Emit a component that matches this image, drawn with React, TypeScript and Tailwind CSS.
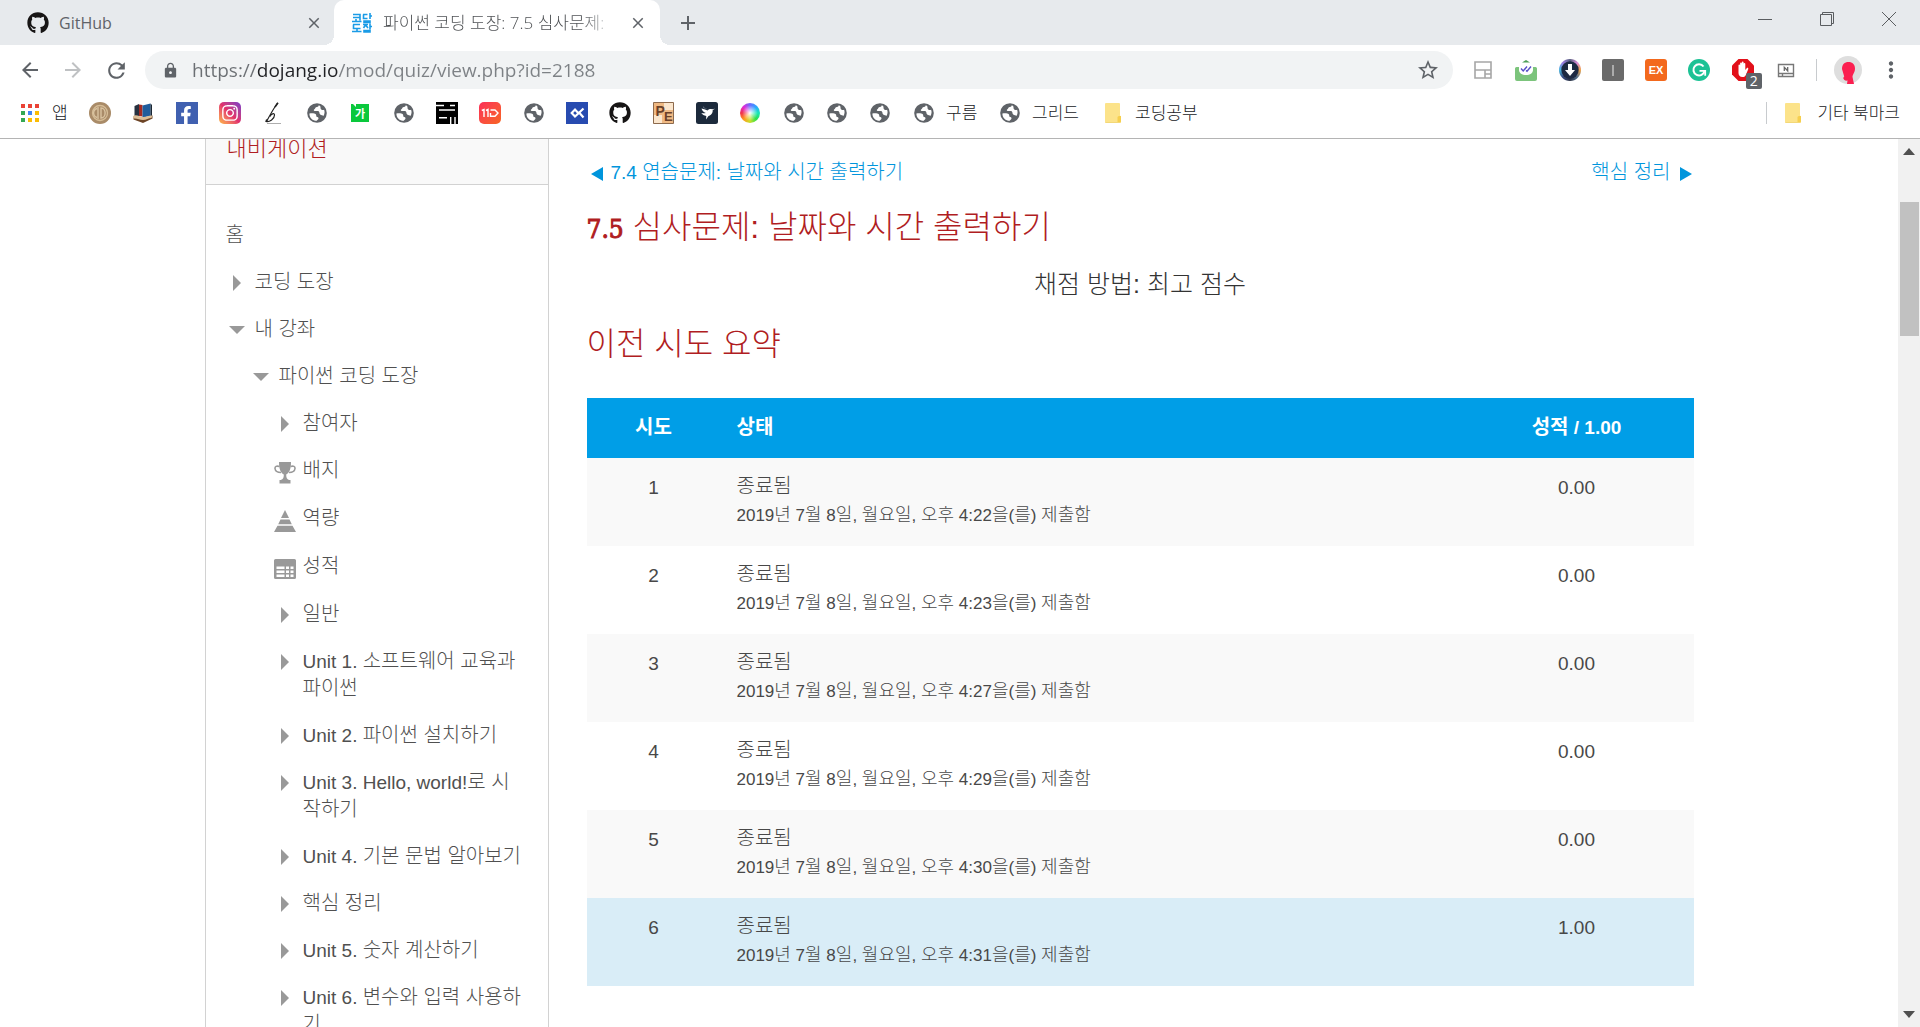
import React from "react";
import { FaGithub, FaFacebookF, FaInstagram } from "react-icons/fa";
import {
  MdArrowBack,
  MdArrowForward,
  MdRefresh,
  MdLock,
  MdStarBorder,
  MdMoreVert,
  MdClose,
  MdAdd,
} from "react-icons/md";

/* ---------- text ---------- */

const HANGUL = /([가-힣]+(?:\s[가-힣]+)*)/;

/** Sets Korean runs one step larger than the Latin beside them. */
function Ko({ text, className = "text-[20px] font-light" }: { text: string; className?: string }) {
  return (
    <>
      {text.split(HANGUL).map((part, i) =>
        i % 2 === 1 ? (
          <span key={i} className={className}>
            {part}
          </span>
        ) : (
          part
        ),
      )}
    </>
  );
}

/* ---------- bookmark icons ---------- */

function Globe() {
  return (
    <svg viewBox="0 0 22 22" className="size-[22px] shrink-0" aria-hidden="true">
      <circle cx="11" cy="11" r="9.8" fill="#5f6368" />
      <path
        d="M3.4 11.400c2.500-.3 5.200-.3 6.400.8.9.9 0 1.900.8 2.500 1 .6 2.100.4 1.900 1.900-.2 1.300-1.500 1.300-1.700 2.200-4 .1-7.500-3.100-7.400-7.400z"
        fill="#fff"
      />
      <path
        d="M12.800 3.300c-.2 1.700-1.700 1.600-2.800 2-1.100.5-.5 1.600-1.600 2-1 .4-.8 1.600.3 1.700 1.800.1 3.300-.5 4.200.5.9.9.2 2.100 1.300 2.900 1.100.8 2.600.4 3.200 1.600 1.300-1.900 1.500-4.300.7-6.200-1.500.7-3.300.1-3.500-1.200-.2-1.200.5-2.200-1.800-3.300z"
        fill="#fff"
      />
    </svg>
  );
}

function Folder() {
  return (
    <svg viewBox="0 0 18 22" className="h-[22px] w-[18px] shrink-0" aria-hidden="true">
      <path d="M2 1h13a1 1 0 0 1 1 1v11.500l1 1V20a1 1 0 0 1-1 1H2a1 1 0 0 1-1-1V2a1 1 0 0 1 1-1z" fill="#fce38a" />
      <path d="M13.500 20.500v-5a1.500 1.500 0 0 1 1.500-1.500h2v5.500a1 1 0 0 1-1 1z" fill="#f6cf4e" />
      <path d="M1.500 20.500h14" stroke="#f3d878" />
    </svg>
  );
}

function Apps() {
  const colors = ["#ea4335", "#ea4335", "#ea4335", "#34a853", "#4285f4", "#fbbc05", "#34a853", "#fbbc05", "#fbbc05"];
  return (
    <svg viewBox="0 0 18 18" className="size-[18px] shrink-0" aria-hidden="true">
      {colors.map((c, i) => (
        <rect key={i} x={(i % 3) * 7} y={Math.floor(i / 3) * 7} width="4" height="4" fill={c} />
      ))}
    </svg>
  );
}

function Coin() {
  return (
    <svg viewBox="0 0 22 22" className="size-[22px]" aria-hidden="true">
      <circle cx="11" cy="11" r="11" fill="#a98b68" />
      <circle cx="11" cy="11" r="7.500" fill="none" stroke="#d6bd97" strokeWidth="1.300" />
      <path d="M9 5v12M8 6.500C3.500 8 3.500 14 8 15.500M12 6v10c5.500 0 5.500-10 0-10z" fill="none" stroke="#d9c3a0" strokeWidth="1.400" />
    </svg>
  );
}

function Books() {
  return (
    <svg viewBox="0 0 22 22" className="size-[22px]" aria-hidden="true">
      <path d="M1.500 14.500 11 17l9.500-3.500v3L11 21l-9.500-3.500z" fill="#6d4426" />
      <path d="M2.500 4 7 2v12l-4.500 1z" fill="#27313f" />
      <path d="M7 2.500 10.500 3v11.500L7 14z" fill="#a32a22" />
      <path d="M10.500 3.500 18.500 1.500v12.500l-8 1.500z" fill="#1f5c9c" />
      <path d="M18.500 1.500 20 3v11l-1.500.5z" fill="#1b2733" />
      <path d="M1 14c4-2 6 1 10 1s6-2 9.500-1.500l-1 2.500c-3 0-5 2-8.500 2s-6-2-9.500-1.500z" fill="#dcbd96" />
    </svg>
  );
}

function Facebook() {
  return (
    <span className="flex size-[22px] items-end justify-end bg-[#4060b0] pr-[3px] text-white">
      <FaFacebookF size={18} />
    </span>
  );
}

function Instagram() {
  return (
    <span className="flex size-[22px] items-center justify-center rounded-[5px] bg-linear-to-tr from-[#fdb640] via-[#e1306c] to-[#7a35c8] text-white">
      <FaInstagram size={18} />
    </span>
  );
}

function ScriptB() {
  return (
    <svg viewBox="0 0 22 22" className="size-[22px]" aria-hidden="true">
      <path d="M15.500 1C12 6 8 13 4.500 19.500c3 .5 8-2.500 8-6.500 0-2.500-3.500-1-4.500 1.500" fill="none" stroke="#222" strokeWidth="1.200" />
      <path d="M16 .8 13 5M4.800 17.500 4 20" stroke="#222" strokeWidth="1.600" />
      <path d="M5 21.500h14" stroke="#999" strokeWidth="0.800" />
    </svg>
  );
}

function GaNote() {
  return (
    <svg viewBox="0 0 22 22" className="size-[22px]" aria-hidden="true">
      <path d="M2 2h2l3 3V2h13v18H2z" fill="#0ac83c" />
      <text x="11" y="15.500" fontSize="11" fontWeight="700" textAnchor="middle" fill="#fff" fontFamily="Noto Sans CJK KR, sans-serif">
        가
      </text>
    </svg>
  );
}

function BlackLines() {
  return (
    <svg viewBox="0 0 22 22" className="size-[22px]" aria-hidden="true">
      <path fill="#000" d="M0 0h22v22H0z" />
      <path d="M0 3.500h8M14 3.500h5M3 8h16M3 15.800h8M14.700 15v7M19 15v7" stroke="#fff" strokeWidth="1.400" />
    </svg>
  );
}

function Eleven() {
  return (
    <span className="block size-[22px] rounded-[5px] bg-linear-to-br from-[#fb2a55] to-[#f8641e]">
      <svg viewBox="0 0 22 22" aria-hidden="true">
        <path d="M2.800 8.500 5 7.500v7.500M7 8.500l2-1v7.500M11.500 8h4.500l3 3-3 3.300h-4.500V11" fill="none" stroke="#fff" strokeWidth="1.400" />
      </svg>
    </span>
  );
}

function CodeX() {
  return (
    <svg viewBox="0 0 22 22" className="size-[22px]" aria-hidden="true">
      <path fill="#274bb0" d="M0 0h22v22H0z" />
      <path d="m17.500 6.500-5.500 5.200-3 2.800-3.300-3.500L9 7.500l3.200 3.500M13.500 11l4 4.500" fill="none" stroke="#fff" strokeWidth="2.200" />
    </svg>
  );
}

function PeIcon() {
  return (
    <svg viewBox="0 0 22 22" className="size-[22px]" aria-hidden="true">
      <path d="M.5.500h20v21H.500z" fill="#efb983" stroke="#8d6a4d" />
      <path d="M11 1h9v7h-9zM1 13h8v8H1z" fill="#fbe6cd" />
      <text x="2.500" y="13.500" fontSize="14" fontWeight="700" fill="#6b4129" fontFamily="Liberation Sans, sans-serif">
        P
      </text>
      <text x="11" y="18.500" fontSize="13" fontWeight="700" fill="#6b4129" fontFamily="Liberation Sans, sans-serif">
        E
      </text>
    </svg>
  );
}

function Bird() {
  return (
    <svg viewBox="0 0 22 22" className="size-[22px]" aria-hidden="true">
      <rect width="22" height="22" rx="2.500" fill="#1c2a3c" />
      <path d="M5.500 6.500c3 .5 4.500 1.500 6 2 1.500-1.500 3-1.700 4.500-1.300l3-.4-2.300 1.200c.3 3.500-2 5.200-4.200 6L10 17.500l.3-3.500c-2.300-.4-4-1.500-5-3 2 .4 3.500.3 4.500 0-2.300-.8-3.700-2.500-4.300-4.500z" fill="#fff" />
      <path d="M7 4c1 2 3 2.500 5 3.500L7.500 6z" fill="#8794a5" />
    </svg>
  );
}

function ColorWheel() {
  return (
    <span className="block size-[22px] p-[1px]">
      <span className="block size-[20px] rounded-full bg-[radial-gradient(circle,#fff_0%,transparent_55%),conic-gradient(#6a6cff,#2aa8ff,#14e6b8,#2ee04a,#c8e02a,#ff9a1e,#f0324a,#e02ad8,#6a6cff)]" />
    </span>
  );
}

/* ---------- extension icons ---------- */

function LayoutExt() {
  return (
    <svg viewBox="0 0 22 22" className="size-[22px]" aria-hidden="true">
      <path d="M3 3h16v16H3zM3 11h16M13 11v8M13 15h6" fill="none" stroke="#a6a6a6" strokeWidth="1.600" />
    </svg>
  );
}

function MailExt() {
  return (
    <svg viewBox="0 0 22 22" className="size-[22px]" aria-hidden="true">
      <path d="M7 3.500 11 1l4 2.500z" fill="#4e9e57" />
      <path d="M0 9.500A1.500 1.500 0 0 1 1.500 8h19A1.500 1.500 0 0 1 22 9.500V20a2 2 0 0 1-2 2H2a2 2 0 0 1-2-2z" fill="#7cc47c" />
      <path d="M4 5h14v6c0 3-3 5-7 5s-7-2-7-5z" fill="#fff" />
      <path d="m6 9.500 2.200 2.500L12 7.500M11 11.500l1 .8 4-4.800" fill="none" stroke="#5950c8" strokeWidth="1.400" />
    </svg>
  );
}

function DownloadExt() {
  return (
    <span className="block size-[22px] rounded-full bg-[conic-gradient(#596080,#d98bd8,#f0a54a,#55708c,#2b3346,#394b80,#4ab7e0,#9a7be0,#596080)]">
      <svg viewBox="0 0 22 22" aria-hidden="true">
        <circle cx="11" cy="11" r="8.700" fill="#1d2942" />
        <path d="M9 5h4v6h3l-5 6-5-6h3z" fill="#fff" />
      </svg>
    </span>
  );
}

function BarExt() {
  return (
    <svg viewBox="0 0 22 22" className="size-[22px]" aria-hidden="true">
      <rect width="22" height="22" rx="2" fill="#6a6a6a" />
      <path d="M11 6v11" stroke="#c9c9c9" strokeWidth="1.400" />
    </svg>
  );
}

function ExExt() {
  return (
    <svg viewBox="0 0 22 22" className="size-[22px]" aria-hidden="true">
      <rect width="22" height="22" rx="3" fill="#f3691d" />
      <text x="11" y="15" fontSize="11" fontWeight="700" textAnchor="middle" fill="#fff" fontFamily="Liberation Sans, sans-serif">
        EX
      </text>
    </svg>
  );
}

function GExt() {
  return (
    <svg viewBox="0 0 22 22" className="size-[22px]" aria-hidden="true">
      <circle cx="11" cy="11" r="11" fill="#1cc295" />
      <path d="M15.500 7.500A5.600 5.600 0 1 0 16.500 12" fill="none" stroke="#fff" strokeWidth="2" />
      <path d="M11.500 11.800h5.700v5" fill="none" stroke="#fff" strokeWidth="1.800" />
    </svg>
  );
}

function HandExt() {
  return (
    <span className="relative block size-[22px]">
      <svg viewBox="0 0 22 22" aria-hidden="true">
        <path d="M6.500 0h9L22 6.500v9L15.500 22h-9L0 15.500v-9z" fill="#e2101a" />
        <path d="M6.500 11V6.200c0-1 1.600-1 1.600 0V9V4.500c0-1.200 1.700-1.200 1.700 0V8.500V3.500c0-1.200 1.800-1.200 1.800 0v5V4.800c0-1.200 1.700-1.200 1.700 0V11l1.400-1.800c.8-.8 2 0 1.500 1l-2.500 6c-.7 1.300-1.700 1.800-3.200 1.800-2.800 0-4-1.800-4-4z" fill="#fff" />
      </svg>
      <span className="absolute top-[14px] left-[14px] flex h-4 w-4 items-center justify-center rounded-[2px] bg-[#5f6368] text-[14px] leading-4 text-white">
        2
      </span>
    </span>
  );
}

function NoteExt() {
  return (
    <svg viewBox="0 0 22 22" className="size-[22px]" aria-hidden="true">
      <path d="M3.500 5.500h15v12h-15zM3.500 14.500h15M7.500 14.500v3" fill="none" stroke="#777" strokeWidth="1.400" />
      <path d="M9.300 12V8.300l3.400 3.500V8" fill="none" stroke="#666" strokeWidth="1.300" />
    </svg>
  );
}

/* ---------- browser chrome ---------- */

const iconMarks: [string, React.ReactNode][] = [
  ["코인", <Coin />],
  ["책", <Books />],
  ["Facebook", <Facebook />],
  ["Instagram", <Instagram />],
  ["블로그", <ScriptB />],
  ["사이트 1", <Globe />],
  ["맞춤법", <GaNote />],
  ["사이트 2", <Globe />],
  ["포트폴리오", <BlackLines />],
  ["쇼핑", <Eleven />],
  ["사이트 3", <Globe />],
  ["코드", <CodeX />],
  ["GitHub", <FaGithub size={22} color="#171515" />],
  ["문제", <PeIcon />],
  ["Bird", <Bird />],
  ["색상", <ColorWheel />],
  ["사이트 4", <Globe />],
  ["사이트 5", <Globe />],
  ["사이트 6", <Globe />],
  ["구름 사이트", <Globe />],
];

const extensions: [string, React.ReactNode][] = [
  ["레이아웃", <LayoutExt />],
  ["메일", <MailExt />],
  ["다운로드", <DownloadExt />],
  ["막대", <BarExt />],
  ["EX", <ExExt />],
  ["문법 검사", <GExt />],
  ["차단", <HandExt />],
  ["노트", <NoteExt />],
];

function TabStrip() {
  return (
    <div className="flex h-[45px] items-stretch bg-[#e7eaed] text-[16px] text-[#5f6368]">
      <div className="flex w-[334px] items-center pr-[9px] pl-[27px]">
        <button className="flex flex-1 items-center gap-[10px] text-left">
          <FaGithub size={22} color="#171515" />
          GitHub
        </button>
        <button aria-label="GitHub 탭 닫기" className="p-0.5">
          <MdClose size={18} />
        </button>
      </div>
      <div className="relative flex w-[326px] items-center rounded-t-[10px] bg-white pr-[11px] pl-[18px]">
        <span className="absolute bottom-0 -left-[10px] size-[10px] bg-[radial-gradient(circle_at_0_0,transparent_10px,#fff_10px)]" />
        <span className="absolute -right-[10px] bottom-0 size-[10px] bg-[radial-gradient(circle_at_100%_0,transparent_10px,#fff_10px)]" />
        <button className="flex min-w-0 flex-1 items-center gap-[11px] text-left">
          <svg viewBox="0 0 20 20" className="size-[20px] shrink-0" aria-hidden="true">
            <path
              d="M1 1.500h7v6M1 4.500h7M0 8.500h9.500M4 6v2M11 1.500h4.500M11.500 1.500v4h4M18 0v6M18 3h2M12 8h6v1.500h-6zM1 11.500h7M1.500 11.500v4h7M0 18.500h9.500M5 16v2M11 11.500h5M13.500 12l-2 3M14 12.500l2 2.500M18 10.500v6M18 13.500h2M12 17.500h6v1.500h-6z"
              fill="none"
              stroke="#1a9be6"
              strokeWidth="1.600"
            />
          </svg>
          <span className="bg-linear-to-r from-[#4a4d50] from-90% to-[#c4c6c8] bg-clip-text text-[17px] font-light whitespace-nowrap text-transparent">
            파이썬 코딩 도장: 7.5 심사문제:
          </span>
        </button>
        <button aria-label="파이썬 코딩 도장 탭 닫기" className="p-0.5">
          <MdClose size={18} />
        </button>
      </div>
      <button aria-label="새 탭" className="ml-[16px] self-center">
        <MdAdd size={24} />
      </button>
      <div className="ml-auto flex h-[38px] text-[#5a5d60]">
        <button aria-label="최소화" className="flex w-[62px] items-center justify-center">
          <svg viewBox="0 0 14 14" className="size-[14px]" fill="none" stroke="currentColor" aria-hidden="true">
            <path d="M0 7.500h14" />
          </svg>
        </button>
        <button aria-label="이전 크기로" className="flex w-[62px] items-center justify-center">
          <svg viewBox="0 0 14 14" className="size-[14px]" fill="none" stroke="currentColor" aria-hidden="true">
            <path d="M.5 2.500h11v11H.500zM2.500 2.500v-2h11v11h-2" />
          </svg>
        </button>
        <button aria-label="닫기" className="flex w-[62px] items-center justify-center">
          <svg viewBox="0 0 14 14" className="size-[14px]" fill="none" stroke="currentColor" aria-hidden="true">
            <path d="m0 0 14 14M14 0 0 14" />
          </svg>
        </button>
      </div>
    </div>
  );
}

function Toolbar() {
  return (
    <div className="flex h-[50px] items-center pr-[16px] pl-[18px] text-[#5f6368]">
      <div className="flex w-[127px] items-center gap-[19px]">
        <button aria-label="뒤로">
          <MdArrowBack size={24} />
        </button>
        <button aria-label="앞으로" className="text-[#bfc1c3]">
          <MdArrowForward size={24} />
        </button>
        <button aria-label="새로고침">
          <MdRefresh size={25} />
        </button>
      </div>
      <div className="flex h-[38px] flex-1 items-center rounded-full bg-[#f1f3f4] pr-[13px] pl-[17px]">
        <MdLock size={17} />
        <input
          aria-label="주소"
          defaultValue="https://dojang.io/mod/quiz/view.php?id=2188"
          className="ml-[13px] flex-1 bg-[linear-gradient(to_right,#6b6f73_64px,#202124_64px,#202124_146px,#7d8185_146px)] bg-clip-text text-[19px] text-transparent outline-none"
        />
        <button aria-label="북마크에 추가">
          <MdStarBorder size={24} />
        </button>
      </div>
      <div className="ml-[19px] flex w-[325px] justify-between">
        {extensions.map(([name, icon]) => (
          <button key={name} aria-label={name}>
            {icon}
          </button>
        ))}
      </div>
      <div className="ml-[19px] h-[22px] w-px bg-[#c8cbce]" />
      <button aria-label="프로필" className="ml-[17px]">
        <svg viewBox="0 0 28 28" className="size-[28px]" aria-hidden="true">
          <circle cx="14" cy="14" r="14" fill="#dedede" />
          <path d="M8 13c0-4.500 2.500-7 6.500-7S21 8.500 21 12.500c0 4-2.500 6-2.500 8.500l1.500 7h-7l.5-3.500c-2 .5-3.800-.5-4.300-2.500l1-1.500z" fill="#fb1f50" />
        </svg>
      </button>
      <button aria-label="메뉴" className="ml-[16px]">
        <MdMoreVert size={26} />
      </button>
    </div>
  );
}

function Bookmarks() {
  return (
    <nav aria-label="북마크" className="flex h-[44px] items-center border-b border-[#b4b4b4] pr-[20px] pb-[7px] pl-[21px] text-[17px] font-light text-[#202124]">
      <a href="#apps" className="flex w-[68px] items-center gap-[13px]">
        <Apps />앱
      </a>
      <div className="flex w-[846px] items-center justify-between">
        {iconMarks.map(([name, icon]) => (
          <a key={name} href="#bookmark" aria-label={name}>
            {icon}
          </a>
        ))}
      </div>
      <a href="#goorm" className="ml-[11px] w-[53px]">
        구름
      </a>
      <a href="#grid" className="flex w-[105px] items-center gap-[11px]">
        <Globe />
        그리드
      </a>
      <a href="#coding" className="flex items-center gap-[13px]">
        <Folder />
        코딩공부
      </a>
      <div className="ml-auto h-[22px] w-px bg-[#c8cbce]" />
      <a href="#others" className="ml-[17px] flex items-center gap-[15px]">
        <Folder />
        기타 북마크
      </a>
    </nav>
  );
}

/* ---------- side navigation ---------- */

type Marker = "closed" | "open" | "trophy" | "pyramid" | "grid";

function MarkerIcon({ kind }: { kind: Marker }) {
  return (
    <svg viewBox="0 0 22 22" className="size-[22px]" fill="#999" aria-hidden="true">
      {kind === "closed" && <path d="M7 1 15 9l-8 8z" />}
      {kind === "open" && <path d="M3 5h16l-8 8z" />}
      {kind === "trophy" && (
        <>
          <path d="M5 0h12c0 7-1.500 10.500-4.800 12.500 0 3.500.8 4.500 2.800 5.500h1.500v3.500h-11V18H7c2-1 2.800-2 2.800-5.500C6.500 10.500 5 7 5 0z" />
          <path d="M5.500 4.500C2.500 3.500.8 4.500 1 6.500c.3 2.500 3 4 6 4M16.500 4.500c3-1 4.700 0 4.500 2-.3 2.500-3 4-6 4" fill="none" stroke="#999" strokeWidth="1.600" />
        </>
      )}
      {kind === "pyramid" && <path d="m11 0 4 8H7zM6.500 9.500h9l2.300 4.800H4.200zM3.500 15.800h15L22 22H0z" />}
      {kind === "grid" && (
        <path
          fillRule="evenodd"
          d="M1.500 1h19A1.500 1.500 0 0 1 22 2.500v17a1.500 1.500 0 0 1-1.500 1.500h-19A1.500 1.500 0 0 1 0 19.500v-17A1.500 1.500 0 0 1 1.500 1zM2.500 8.500v2.500h8V8.500zm9.500 0v2.500h3V8.500zm4.500 0v2.500h3V8.500zm-14 4v2.500h8v-2.500zm9.500 0v2.500h3v-2.500zm4.500 0v2.500h3v-2.500zm-14 4V19h8v-2.500zm9.500 0V19h3v-2.500zm4.500 0V19h3v-2.500z"
        />
      )}
    </svg>
  );
}

const units: [Marker, string][] = [
  ["closed", "참여자"],
  ["trophy", "배지"],
  ["pyramid", "역량"],
  ["grid", "성적"],
  ["closed", "일반"],
  ["closed", "Unit 1. 소프트웨어 교육과 파이썬"],
  ["closed", "Unit 2. 파이썬 설치하기"],
  ["closed", "Unit 3. Hello, world!로 시작하기"],
  ["closed", "Unit 4. 기본 문법 알아보기"],
  ["closed", "핵심 정리"],
  ["closed", "Unit 5. 숫자 계산하기"],
  ["closed", "Unit 6. 변수와 입력 사용하기"],
];

function NavItem({ marker, text }: { marker: Marker; text: string }) {
  const pictured = marker !== "closed" && marker !== "open";
  return (
    <a href="#item" className={pictured ? "mb-[21px] flex gap-[7px]" : "mb-[20px] flex gap-[7px]"}>
      <span className="flex h-[27px] shrink-0 items-end">
        <MarkerIcon kind={marker} />
      </span>
      <span>
        <Ko text={text} />
      </span>
    </a>
  );
}

function SideNav() {
  return (
    <aside className="w-[344px] shrink-0 border-x border-[#d2d2d2] text-[19px] leading-[27px] text-[#505050]">
      <h2 className="-mt-[4px] border-b border-[#d2d2d2] bg-[#f9f9f9] pb-[21px] pl-[21px] text-[22px] leading-[28px] font-light text-[#b01d22]">
        내비게이션
      </h2>
      <nav aria-label="강좌" className="pt-[37px] pr-[21px] pl-[20px]">
        <a href="#home" className="mb-[20px] block">
          <Ko text="홈" />
        </a>
        <NavItem marker="closed" text="코딩 도장" />
        <NavItem marker="open" text="내 강좌" />
        <div className="pl-[24px]">
          <NavItem marker="open" text="파이썬 코딩 도장" />
          <div className="pl-[24px]">
            {units.map(([marker, text]) => (
              <NavItem key={text} marker={marker} text={text} />
            ))}
          </div>
        </div>
      </nav>
    </aside>
  );
}

/* ---------- quiz ---------- */

const attempts = [
  { minute: "22", grade: "0.00", tone: "bg-[#f9f9f9]" },
  { minute: "23", grade: "0.00", tone: "bg-white" },
  { minute: "27", grade: "0.00", tone: "bg-[#f9f9f9]" },
  { minute: "29", grade: "0.00", tone: "bg-white" },
  { minute: "30", grade: "0.00", tone: "bg-[#f9f9f9]" },
  { minute: "31", grade: "1.00", tone: "bg-[#d9edf7]" },
];

function Triangle({ points }: { points: string }) {
  return (
    <svg viewBox="0 0 12 14" className="mt-[3px] h-[14px] w-[12px] shrink-0" fill="currentColor" aria-hidden="true">
      <polygon points={points} />
    </svg>
  );
}

function Quiz() {
  return (
    <main className="min-w-0 flex-1 text-[19px] text-[#484848]">
      <div className="flex justify-between pt-[19px] pr-[2px] pl-[4px] leading-[28px] text-[#0095dc]">
        <a href="#prev" className="flex items-center gap-[8px]">
          <Triangle points="12,0 12,14 0,7" />
          <span>
            <Ko text="7.4 연습문제: 날짜와 시간 출력하기" />
          </span>
        </a>
        <a href="#next" className="flex items-center gap-[9px]">
          <span>
            <Ko text="핵심 정리" />
          </span>
          <Triangle points="0,0 0,14 12,7" />
        </a>
      </div>
      <h1 className="mt-[20px] text-[32px] leading-[40px] font-light text-[#b01d22]">
        <span className="font-['DejaVu_Serif_Condensed','DejaVu_Serif',serif] text-[26px] font-normal [-webkit-text-stroke:1px_#b01d22]">7.5</span>{" "}
        심사문제: 날짜와 시간 출력하기
      </h1>
      <p className="mt-[19px] text-center text-[25px] leading-[32px] font-light text-[#333]">채점 방법: 최고 점수</p>
      <h2 className="mt-[24px] text-[32px] leading-[40px] font-light text-[#b01d22]">이전 시도 요약</h2>
      <table className="mt-[34px] w-full table-fixed">
        <thead>
          <tr className="h-[60px] bg-[#009ee7] font-bold text-white">
            <th scope="col" className="w-[134px] pb-[2px]">
              <Ko text="시도" className="text-[20px]" />
            </th>
            <th scope="col" className="pb-[2px] pl-[16px] text-left">
              <Ko text="상태" className="text-[20px]" />
            </th>
            <th scope="col" className="w-[234px] pb-[2px]">
              <Ko text="성적 / 1.00" className="text-[20px]" />
            </th>
          </tr>
        </thead>
        <tbody>
          {attempts.map((a, i) => (
            <tr key={a.minute} className={a.tone + " h-[88px] align-top"}>
              <td className="pt-[16px] text-center leading-[28px]">{i + 1}</td>
              <td className="pt-[14px] pl-[16px] leading-[29px]">
                <div>
                  <Ko text="종료됨" />
                </div>
                <div className="text-[17px]">
                  <Ko
                    text={`2019년 7월 8일, 월요일, 오후 4:${a.minute}을(를) 제출함`}
                    className="text-[18px] font-light"
                  />
                </div>
              </td>
              <td className="pt-[16px] text-center leading-[28px]">{a.grade}</td>
            </tr>
          ))}
        </tbody>
      </table>
    </main>
  );
}

function Scrollbar() {
  return (
    <div className="flex w-[22px] shrink-0 flex-col items-center bg-[#f1f1f1] py-[9px] text-[#505050]" aria-hidden="true">
      <svg viewBox="0 0 12 7" className="h-[7px] w-[12px]" fill="currentColor">
        <path d="M6 0l6 7H0z" />
      </svg>
      <div className="mt-[47px] h-[134px] w-[19px] bg-[#c1c1c1]" />
      <svg viewBox="0 0 12 7" className="mt-auto h-[7px] w-[12px]" fill="currentColor">
        <path d="M0 0h12L6 7z" />
      </svg>
    </div>
  );
}

export default function App() {
  return (
    <div className="flex h-screen flex-col overflow-hidden bg-white font-['Open_Sans','Noto_Sans_CJK_KR',sans-serif]">
      <header>
        <TabStrip />
        <Toolbar />
        <Bookmarks />
      </header>
      <div className="flex min-h-0 flex-1 font-['Liberation_Sans','Noto_Sans_CJK_KR',sans-serif]">
        <div className="min-w-0 flex-1 overflow-hidden">
          <div className="mx-auto flex max-w-[1489px] gap-[38px]">
            <SideNav />
            <Quiz />
          </div>
        </div>
        <Scrollbar />
      </div>
    </div>
  );
}
